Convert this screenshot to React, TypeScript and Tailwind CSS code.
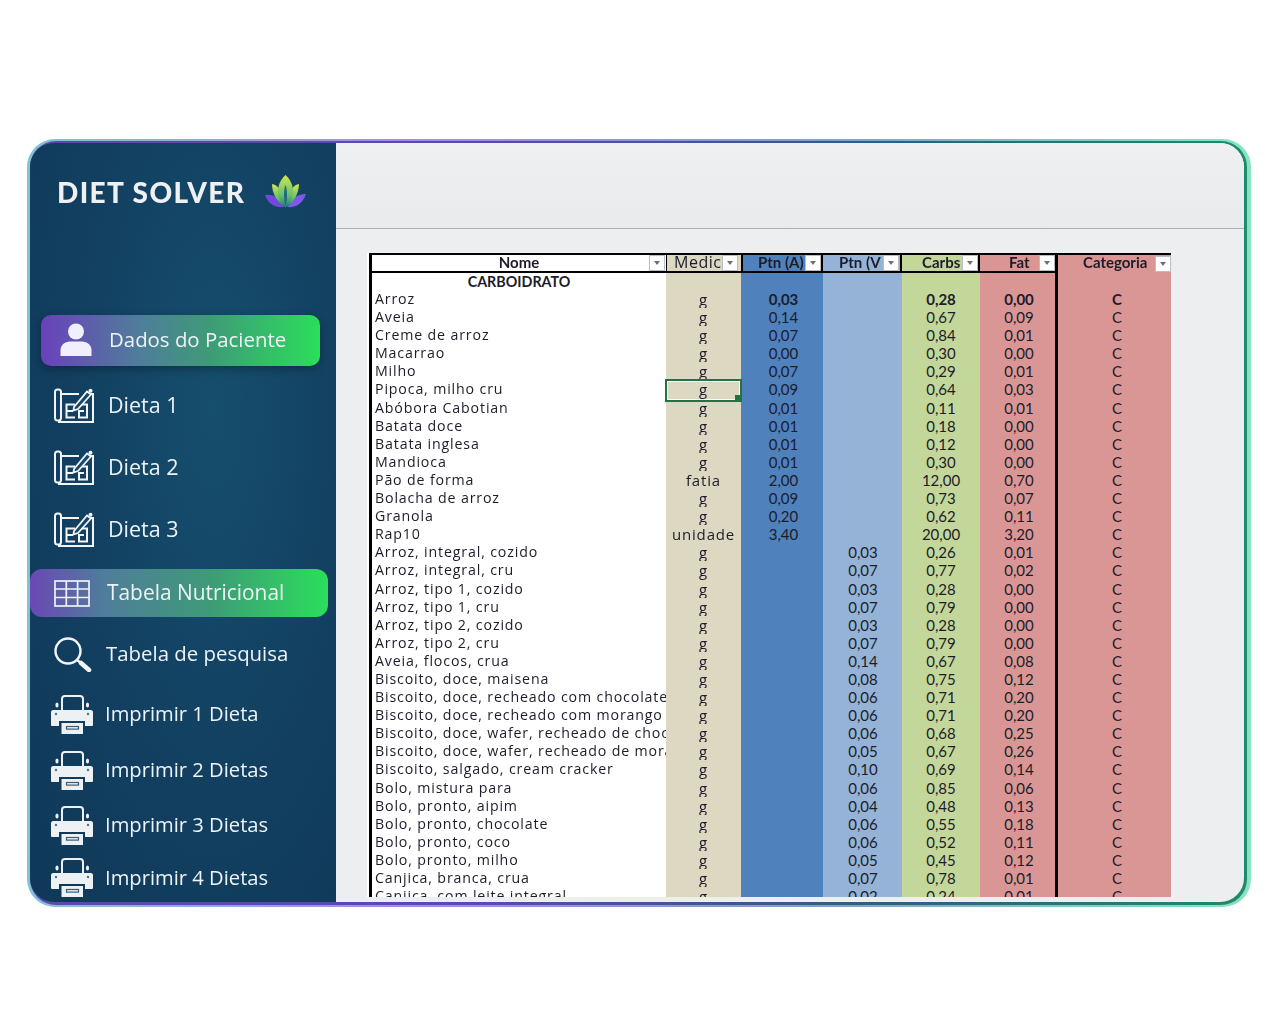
import React from "react";

type Food = [string, string, string, string, string, string];

const foods: Food[] = [
  ["Arroz", "g", "0,03", "", "0,28", "0,00"],
  ["Aveia", "g", "0,14", "", "0,67", "0,09"],
  ["Creme de arroz", "g", "0,07", "", "0,84", "0,01"],
  ["Macarrao", "g", "0,00", "", "0,30", "0,00"],
  ["Milho", "g", "0,07", "", "0,29", "0,01"],
  ["Pipoca, milho cru", "g", "0,09", "", "0,64", "0,03"],
  ["Abóbora Cabotian", "g", "0,01", "", "0,11", "0,01"],
  ["Batata doce", "g", "0,01", "", "0,18", "0,00"],
  ["Batata inglesa", "g", "0,01", "", "0,12", "0,00"],
  ["Mandioca", "g", "0,01", "", "0,30", "0,00"],
  ["Pão de forma", "fatia", "2,00", "", "12,00", "0,70"],
  ["Bolacha de arroz", "g", "0,09", "", "0,73", "0,07"],
  ["Granola", "g", "0,20", "", "0,62", "0,11"],
  ["Rap10", "unidade", "3,40", "", "20,00", "3,20"],
  ["Arroz, integral, cozido", "g", "", "0,03", "0,26", "0,01"],
  ["Arroz, integral, cru", "g", "", "0,07", "0,77", "0,02"],
  ["Arroz, tipo 1, cozido", "g", "", "0,03", "0,28", "0,00"],
  ["Arroz, tipo 1, cru", "g", "", "0,07", "0,79", "0,00"],
  ["Arroz, tipo 2, cozido", "g", "", "0,03", "0,28", "0,00"],
  ["Arroz, tipo 2, cru", "g", "", "0,07", "0,79", "0,00"],
  ["Aveia, flocos, crua", "g", "", "0,14", "0,67", "0,08"],
  ["Biscoito, doce, maisena", "g", "", "0,08", "0,75", "0,12"],
  ["Biscoito, doce, recheado com chocolate", "g", "", "0,06", "0,71", "0,20"],
  ["Biscoito, doce, recheado com morango", "g", "", "0,06", "0,71", "0,20"],
  ["Biscoito, doce, wafer, recheado de chocolate", "g", "", "0,06", "0,68", "0,25"],
  ["Biscoito, doce, wafer, recheado de morango", "g", "", "0,05", "0,67", "0,26"],
  ["Biscoito, salgado, cream cracker", "g", "", "0,10", "0,69", "0,14"],
  ["Bolo, mistura para", "g", "", "0,06", "0,85", "0,06"],
  ["Bolo, pronto, aipim", "g", "", "0,04", "0,48", "0,13"],
  ["Bolo, pronto, chocolate", "g", "", "0,06", "0,55", "0,18"],
  ["Bolo, pronto, coco", "g", "", "0,06", "0,52", "0,11"],
  ["Bolo, pronto, milho", "g", "", "0,05", "0,45", "0,12"],
  ["Canjica, branca, crua", "g", "", "0,07", "0,78", "0,01"],
  ["Canjica, com leite integral", "g", "", "0,02", "0,24", "0,01"],
];

const cols = "grid grid-cols-[294px_75px_82px_79px_78px_78px_113px]";

const PersonIcon = () => (
  <svg width="32" height="33" viewBox="0 0 32 33" className="ml-[19px] shrink-0">
    <circle cx="16" cy="8.5" r="8" fill="#f1effb" />
    <path d="M0.5 33 V27 C0.5 21 6 18.5 11 18.5 H21 C26 18.5 31.5 21 31.5 27 V33 Z" fill="#f1effb" />
  </svg>
);

const PlanIcon = () => (
  <svg width="41" height="36" viewBox="0 0 41 36" fill="none" stroke="#f2f5f8" strokeWidth="2" className="ml-[23px] shrink-0">
    <rect x="1" y="1.5" width="6" height="31" rx="2.5" />
    <path d="M7 6 H25 M32 6 H39 V34 H4" />
    <path d="M21 16.5 H12.5 V29.5 H21 M13 23 H19" />
    <path d="M25 16.5 H33 V29.5 H25 V23 H30" />
    <path d="M20 19 L33 3.5 L37 6.5 L24 21 L19.5 22.5 Z" fill="#15476a" strokeWidth="1.8" />
    <circle cx="36.5" cy="2.8" r="2" fill="#f2f5f8" stroke="none" />
  </svg>
);

const GridIcon = () => (
  <svg width="36" height="27" viewBox="0 0 36 27" fill="none" stroke="#eef2f6" strokeWidth="1.7" className="ml-[24px] shrink-0">
    <rect x="1" y="1" width="34" height="25" />
    <path d="M1 9 H35 M1 17.5 H35 M12.3 1 V26 M23.6 1 V26" />
  </svg>
);

const SearchIcon = () => (
  <svg width="38" height="35" viewBox="0 0 38 35" fill="none" stroke="#f2f5f8" className="ml-[23px] shrink-0">
    <circle cx="14" cy="14" r="12.5" strokeWidth="2.4" />
    <path d="M23 23 L27 26" strokeWidth="2.4" />
    <path d="M27 26 L35 33" strokeWidth="4.5" strokeLinecap="round" />
  </svg>
);

const PrinterIcon = () => (
  <svg width="42" height="39" viewBox="0 0 42 39" className="ml-[20px] shrink-0">
    <path d="M11 15 V4 C11 2 12 1 14 1 H29 C31 1 32 2 32 4 V15" fill="none" stroke="#eef1f4" strokeWidth="2" />
    <ellipse cx="6" cy="10" rx="1.6" ry="2.6" fill="#eef1f4" />
    <ellipse cx="36.5" cy="10" rx="1.6" ry="2.6" fill="#eef1f4" />
    <path d="M2 15 H40 C41 15 42 16 42 17 V30 Q42 31 41 31 H34 V26 H8 V31 H1 Q0 31 0 30 V17 C0 16 1 15 2 15 Z" fill="#eef1f4" />
    <circle cx="5" cy="19" r="1.2" fill="#4a7088" />
    <circle cx="37" cy="19" r="1.2" fill="#4a7088" />
    <path d="M10.5 28 H32 V39 H10.5 Z" fill="#eef1f4" />
    <rect x="15.5" y="31.5" width="12" height="2.6" fill="none" stroke="#31607f" strokeWidth="1.2" />
  </svg>
);

const Lotus = () => (
  <svg width="42" height="34" viewBox="0 0 42 34" className="ml-[20px]">
    <defs>
      <linearGradient id="leaf" x1="0" y1="0" x2="0" y2="1">
        <stop offset="0" stopColor="#d2e552" />
        <stop offset="0.6" stopColor="#6dc06a" />
        <stop offset="1" stopColor="#1f6f83" />
      </linearGradient>
    </defs>
    <path d="M0 20 C8 19 15 22 19 32 C10 33 3 29 0 20 Z" fill="#7147dc" />
    <path d="M41 19 C33 19 26 23 22 32 C31 33 38 28 41 19 Z" fill="#7e5ae8" />
    <path d="M7 9 C12 10 16 14 18 22 C19 27 19 29 19 32 C13 28 7 19 7 9 Z" fill="url(#leaf)" />
    <path d="M34 9 C29 10 25 14 23 22 C22 27 22 29 22 32 C28 28 34 19 34 9 Z" fill="url(#leaf)" />
    <path d="M20.5 0 C25 4 29 11 28 19 C27 25 23 29 20.5 33 C18 29 14 25 13 19 C12 11 16 4 20.5 0 Z" fill="url(#leaf)" />
    <path d="M20.5 10 C18.5 15 18.5 24 20.5 31 C22.5 24 22.5 15 20.5 10 Z" fill="#1c6a86" />
  </svg>
);

const FilterBtn = ({ className = "" }: { className?: string }) => (
  <span className={`absolute top-1/2 -translate-y-1/2 flex h-[16px] w-[16px] items-center justify-center border border-[#b9bec4] bg-white ${className}`}>
    <span className="h-0 w-0 border-x-[3.5px] border-t-[4px] border-x-transparent border-t-[#6b7075]" />
  </span>
);

const MenuItem = ({ icon, label, h, textClass = "ml-[13px] pb-[1px] text-[21.5px]" }: { icon: React.ReactNode; label: string; h: string; textClass?: string }) => (
  <div className={`flex items-center text-[#eef3f7] ${h}`}>
    {icon}
    <span className={textClass}>{label}</span>
  </div>
);

export default function App() {
  return (
    <div className="min-h-[1024px] bg-white pl-[27px] pt-[139px] font-['Open_Sans',sans-serif]">
      {/* outer glow + dark inner line */}
      <div className="h-[768px] w-[1224px] rounded-[28px] bg-[linear-gradient(90deg,#7fc4d2_0%,#a48ce0_30%,#7fa0d0_65%,#86e5c0_100%)] pb-[2px] pl-[3px] pr-[4px] pt-[2px] blur-[0.4px]">
        <div className="h-full w-full rounded-[26px] bg-[linear-gradient(90deg,#5d48b0_0%,#5d48b0_35%,#2f5f80_70%,#1f8a6c_100%)] pb-[3px] pr-[3px] pt-[2px]">
          <div className="flex h-full w-full overflow-hidden rounded-[24px]">
            {/* Sidebar */}
            <aside className="flex w-[306px] shrink-0 flex-col bg-[radial-gradient(ellipse_at_60%_35%,#164e6e_0%,#123f60_55%,#0f3858_100%)] pl-[1px]">
              <div className="flex h-[98px] items-center pl-[26px]">
                <span className="font-['Lato',sans-serif] text-[28px] font-black leading-none tracking-[1.4px] text-[#eef0f2]">DIET SOLVER</span>
                <Lotus />
              </div>
              <div className="ml-[10px] mt-[74px] flex h-[51px] w-[279px] items-center rounded-[10px] bg-[linear-gradient(90deg,#6a41bb_0%,#4f7d9b_35%,#3f9a78_60%,#2ade5a_100%)] pb-[2px] text-[20.4px] text-[#eef3f7] shadow-[0_3px_8px_rgba(0,0,0,0.3)]">
                <PersonIcon />
                <span className="ml-[17px]">Dados do Paciente</span>
              </div>
              <div className="mt-[9px]">
                <MenuItem icon={<PlanIcon />} label="Dieta 1" h="h-[62px]" />
                <MenuItem icon={<PlanIcon />} label="Dieta 2" h="h-[62px]" />
                <MenuItem icon={<PlanIcon />} label="Dieta 3" h="h-[62px]" />
              </div>
              <div className="-ml-[1px] mt-[8px] flex h-[48px] w-[298px] items-center rounded-[12px] bg-[linear-gradient(90deg,#6a48b5_0%,#4f7d9b_25%,#3f9a78_60%,#2ade5a_100%)] text-[20.9px] text-[#eef3f7]">
                <GridIcon />
                <span className="ml-[17px]">Tabela Nutricional</span>
              </div>
              <div className="mt-[6px]">
                <MenuItem icon={<SearchIcon />} label="Tabela de pesquisa" h="h-[62px]" textClass="ml-[14px] pb-[1px] text-[20.4px]" />
              </div>
              <div className="mt-[1px]">
                <MenuItem icon={<PrinterIcon />} label="Imprimir 1 Dieta" h="h-[56px]" textClass="ml-[12px] pb-[2px] text-[20.2px]" />
                <MenuItem icon={<PrinterIcon />} label="Imprimir 2 Dietas" h="h-[56px]" textClass="ml-[12px] pb-[2px] text-[20.2px]" />
                <MenuItem icon={<PrinterIcon />} label="Imprimir 3 Dietas" h="h-[55px]" textClass="ml-[12px] pb-[2px] text-[20.2px]" />
                <MenuItem icon={<PrinterIcon />} label="Imprimir 4 Dietas" h="h-[49px]" textClass="ml-[12px] text-[20.2px]" />
              </div>
            </aside>

            {/* Main */}
            <main className="flex min-w-0 flex-1 flex-col bg-[#eceef0]">
              <div className="h-[86px] shrink-0 border-b-[1.5px] border-[#a3b2bc] bg-[linear-gradient(180deg,#eff0f2_0%,#e8eaec_100%)]" />
              <div className="ml-[31px] mt-[24px] h-[644px] w-[804px] overflow-hidden bg-white pl-[2px]">
                <div className="h-full border-l-[3px] border-black text-[14.2px] leading-[18.1px] tracking-[0.85px] text-[#1c1c2a]">
                  {/* header */}
                  <div className={`${cols} h-[20px] border-t-[2px] border-black font-['Lato',sans-serif] text-[15px] font-bold leading-[15px] tracking-normal`}>
                    <div className="relative border-b-[2px] border-black bg-white text-center">Nome<FilterBtn className="right-[1px]" /></div>
                    <div className="relative border-b-[2px] border-l border-black bg-[#ddd8c2] pl-[7px] font-['Open_Sans',sans-serif] text-[16px] font-normal tracking-[0.5px]">Medic<FilterBtn className="right-[3px]" /></div>
                    <div className="relative border-x-[2px] border-b-[2px] border-black bg-[#4f81bd] pl-[15px]">Ptn (A)<FilterBtn className="right-0" /></div>
                    <div className="relative border-r-[2px] border-b-[2px] border-black bg-[#95b3d7] pl-[16px]">Ptn (V<FilterBtn className="right-[1px]" /></div>
                    <div className="relative border-r-[2px] border-b-[2px] border-black bg-[#c4d79b] pl-[20px]">Carbs<FilterBtn className="right-0" /></div>
                    <div className="relative border-r-[3px] border-b-[2px] border-black bg-[#da9694] pl-[29px]">Fat<FilterBtn className="right-0" /></div>
                    <div className="relative bg-[#da9694] pl-[25px]">Categoria<FilterBtn className="right-0" /></div>
                  </div>
                  {/* section row */}
                  <div className={`${cols} h-[17px]`}>
                    <div className="bg-white text-center font-['Lato',sans-serif] text-[14.3px] font-bold tracking-normal">CARBOIDRATO</div>
                    <div className="bg-[#ddd8c2]" />
                    <div className="bg-[#4f81bd]" />
                    <div className="bg-[#95b3d7]" />
                    <div className="bg-[#c4d79b]" />
                    <div className="border-r-[3px] border-black bg-[#da9694]" />
                    <div className="bg-[#da9694]" />
                  </div>
                  {foods.map((f, i) => {
                    const num = `text-center font-['Lato',sans-serif] text-[15px] tracking-normal ${i === 0 ? "font-bold" : ""}`;
                    return (
                      <div key={f[0]} className={`${cols} h-[18.1px]`}>
                        <div className="overflow-hidden whitespace-nowrap bg-white pl-[3px]">{f[0]}</div>
                        <div className="relative bg-[#ddd8c2] text-center text-[15px]">
                          {f[1]}
                          {i === 5 && (
                            <>
                              <span className="absolute inset-x-[-1px] top-[-1px] z-10 h-[23px] border-[2px] border-[#217346]">
                                <span className="block h-full w-full border border-white" />
                              </span>
                              <span className="absolute right-[-1px] top-[15px] z-20 h-[7px] w-[7px] bg-[#217346]" />
                            </>
                          )}
                        </div>
                        <div className={`bg-[#4f81bd] pl-[3px] ${num}`}>{f[2]}</div>
                        <div className={`bg-[#95b3d7] pl-[1px] ${num}`}>{f[3]}</div>
                        <div className={`bg-[#c4d79b] ${num}`}>{f[4]}</div>
                        <div className={`border-r-[3px] border-black bg-[#da9694] pl-[3px] ${num}`}>{f[5]}</div>
                        <div className={`bg-[#da9694] pl-[5px] ${num}`}>C</div>
                      </div>
                    );
                  })}
                </div>
              </div>
            </main>
          </div>
        </div>
      </div>
    </div>
  );
}
